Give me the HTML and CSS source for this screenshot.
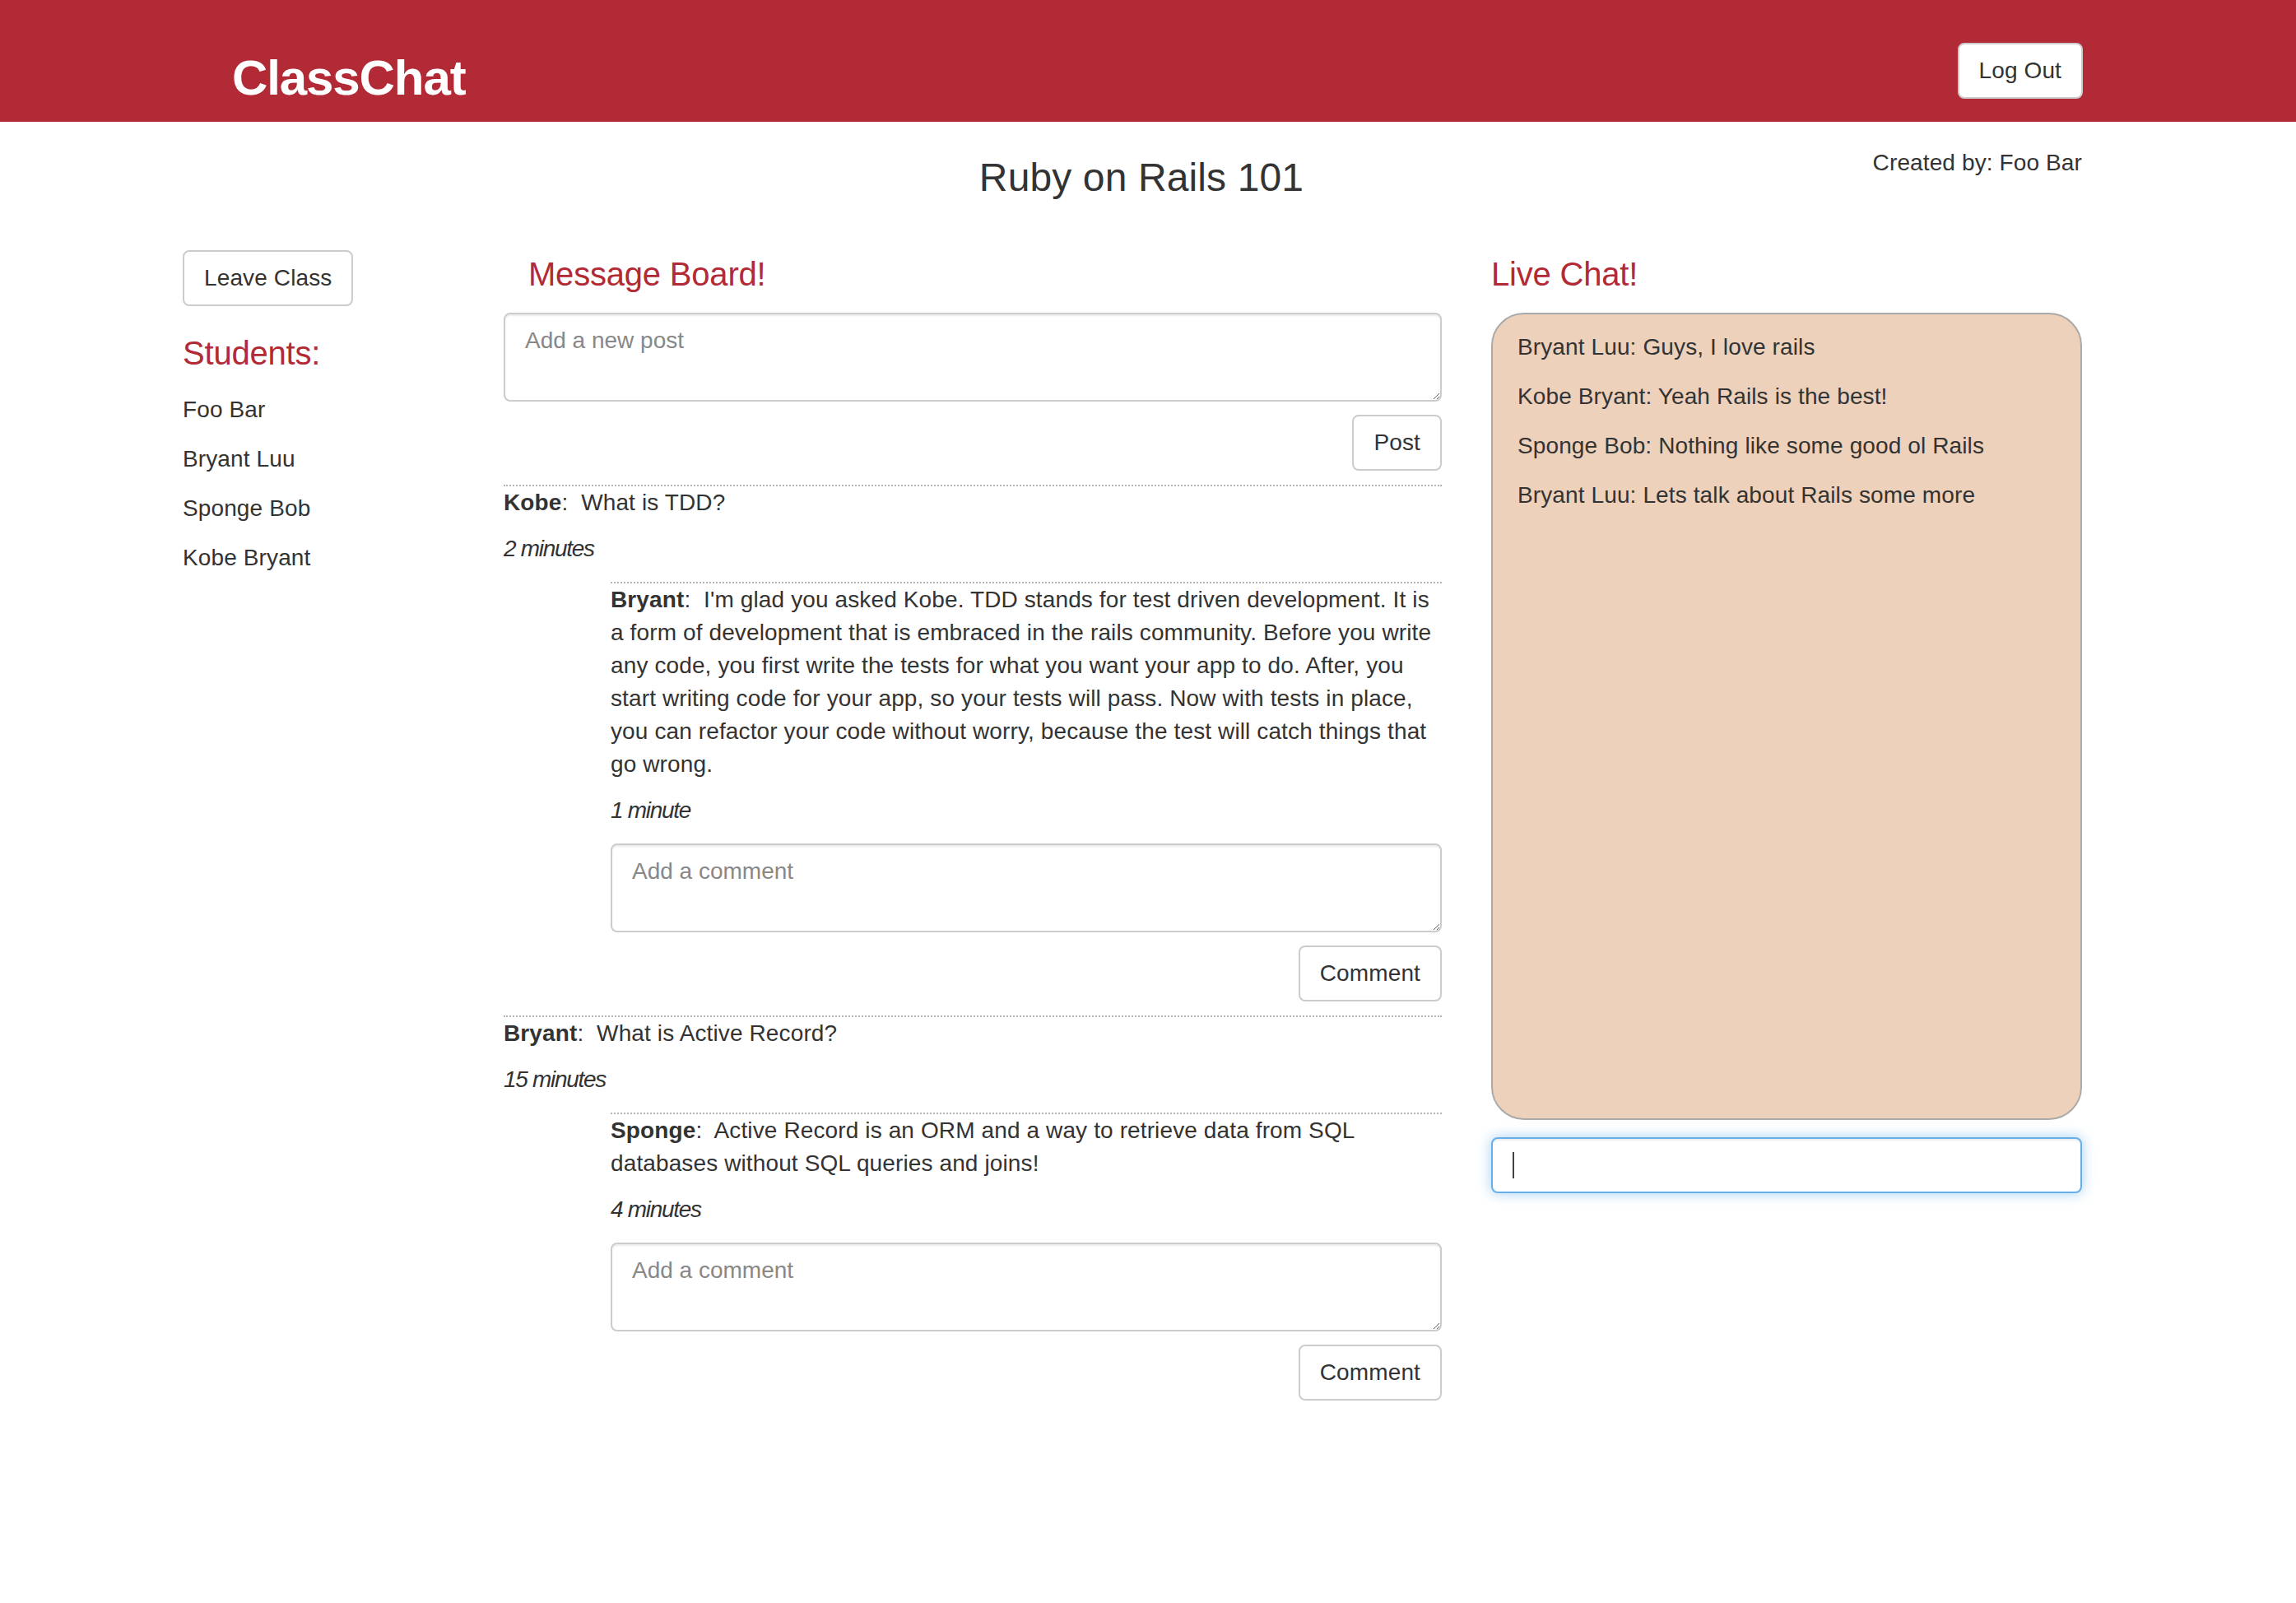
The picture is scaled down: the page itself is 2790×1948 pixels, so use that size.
FILE: index.html
```html
<!DOCTYPE html>
<html lang="en">
<head>
<meta charset="utf-8">
<title>ClassChat</title>
<link rel="stylesheet" href="styles.css">
</head>
<body>
<nav class="navbar">
  <div class="container nav-inner">
    <a class="brand">ClassChat</a>
    <button class="btn nav-btn">Log Out</button>
  </div>
</nav>

<header class="container page-header">
  <div></div>
  <h1 class="title">Ruby on Rails 101</h1>
  <p class="created">Created by: Foo Bar</p>
</header>

<main class="container main">
  <aside class="col-left">
    <button class="btn">Leave Class</button>
    <h2 class="section-title students-title">Students:</h2>
    <p class="student">Foo Bar</p>
    <p class="student">Bryant Luu</p>
    <p class="student">Sponge Bob</p>
    <p class="student">Kobe Bryant</p>
  </aside>

  <section class="col-mid">
    <h2 class="section-title board-title">Message Board!</h2>
    <form class="entry-form">
      <textarea class="field" placeholder="Add a new post"></textarea>
      <div class="actions"><button type="button" class="btn">Post</button></div>
    </form>

    <article class="post">
      <p class="line"><strong>Kobe</strong>:&nbsp; What is TDD?</p>
      <p class="ts">2 minutes</p>
      <div class="replies">
        <div class="reply">
          <p class="line"><strong>Bryant</strong>:&nbsp; I'm glad you asked Kobe. TDD stands for test driven development. It is a form of development that is embraced in the rails community. Before you write any code, you first write the tests for what you want your app to do. After, you start writing code for your app, so your tests will pass. Now with tests in place, you can refactor your code without worry, because the test will catch things that go wrong.</p>
          <p class="ts">1 minute</p>
        </div>
        <form class="entry-form">
          <textarea class="field" placeholder="Add a comment"></textarea>
          <div class="actions"><button type="button" class="btn">Comment</button></div>
        </form>
      </div>
    </article>

    <article class="post">
      <p class="line"><strong>Bryant</strong>:&nbsp; What is Active Record?</p>
      <p class="ts">15 minutes</p>
      <div class="replies">
        <div class="reply">
          <p class="line"><strong>Sponge</strong>:&nbsp; Active Record is an ORM and a way to retrieve data from SQL databases without SQL queries and joins!</p>
          <p class="ts">4 minutes</p>
        </div>
        <form class="entry-form">
          <textarea class="field" placeholder="Add a comment"></textarea>
          <div class="actions"><button type="button" class="btn">Comment</button></div>
        </form>
      </div>
    </article>
  </section>

  <section class="col-right">
    <h2 class="section-title">Live Chat!</h2>
    <div class="chat-box">
      <p>Bryant Luu: Guys, I love rails</p>
      <p>Kobe Bryant: Yeah Rails is the best!</p>
      <p>Sponge Bob: Nothing like some good ol Rails</p>
      <p>Bryant Luu: Lets talk about Rails some more</p>
    </div>
    <div class="chat-input-wrap">
      <input class="chat-input" type="text">
      <span class="caret"></span>
    </div>
  </section>
</main>
</body>
</html>
```

FILE: styles.css
```css
* { box-sizing: border-box; }

html, body {
  margin: 0;
  padding: 0;
  background: #fff;
}

body {
  font-family: "Liberation Sans", Arial, Helvetica, sans-serif;
  font-size: 28px;
  line-height: 40px;
  letter-spacing: 0.12px;
  color: #333;
}

.container {
  width: 2308px;
  margin-left: 222px;
}

/* buttons */
.btn {
  display: inline-block;
  font-family: inherit;
  font-size: 28px;
  line-height: 40px;
  letter-spacing: 0.12px;
  padding: 12px 24px;
  color: #333;
  background: #fff;
  border: 2px solid #ccc;
  border-radius: 8px;
  height: 68px;
  margin: 0;
  cursor: pointer;
}

/* navbar */
.navbar {
  background: #b22a36;
  height: 148px;
}
.nav-inner {
  display: flex;
  justify-content: space-between;
  align-items: flex-start;
}
.brand {
  margin: 65px 0 0 60px;
  font-size: 60px;
  line-height: 60px;
  font-weight: bold;
  color: #fff;
  letter-spacing: -1.1px;
}
.nav-inner .nav-btn {
  margin: 52px -1px 0 0;
}

/* header */
.page-header {
  display: grid;
  grid-template-columns: 1fr auto 1fr;
  align-items: start;
}
.title {
  margin: 41px 0 0 22px;
  font-size: 48px;
  line-height: 53px;
  font-weight: 500;
  color: #333;
}
.created {
  justify-self: end;
  margin: 30px 0 0 0;
}

/* main columns */
.main {
  display: flex;
  align-items: flex-start;
  margin-top: 62px;
}
.col-left {
  flex: 0 0 390px;
}
.col-mid {
  flex: 0 0 1140px;
}
.col-right {
  flex: 1 1 auto;
  margin-left: 60px;
}

.section-title {
  font-size: 40px;
  line-height: 44px;
  font-weight: 500;
  color: #b22a36;
  margin: 7px 0 25px 0;
  letter-spacing: -0.2px;
}
.students-title {
  margin: 35px 0 27px 0;
}
.board-title {
  padding-left: 30px;
}

.student {
  margin: 0 0 20px 0;
}

/* forms */
.entry-form {
  margin: 0;
}
.field {
  display: block;
  width: 100%;
  height: 108px;
  padding: 12px 24px;
  font-family: inherit;
  font-size: 28px;
  line-height: 40px;
  color: #555;
  background: #fff;
  border: 2px solid #ccc;
  border-radius: 8px;
  box-shadow: inset 0 2px 2px rgba(0, 0, 0, 0.075);
  resize: vertical;
  margin: 0 0 16px 0;
}
.field::placeholder {
  color: #888;
}
.actions {
  display: flex;
  justify-content: flex-end;
  margin-bottom: 17px;
}

/* posts */
.post {
  border-top: 2px dotted #b5b5b5;
}
.line {
  margin: 0;
}
.ts {
  margin: 16px 0 20px 0;
  font-style: italic;
  letter-spacing: -1.3px;
}
.replies {
  margin-left: 130px;
}
.reply {
  border-top: 2px dotted #b5b5b5;
}

/* chat */
.chat-box {
  height: 981px;
  background: #edd1ba;
  border: 2px solid #aaa;
  border-radius: 40px;
  padding: 20px 30px;
}
.chat-box p {
  margin: 0 0 20px 0;
}
.chat-input-wrap {
  position: relative;
  margin-top: 21px;
}
.chat-input {
  display: block;
  width: 100%;
  height: 68px;
  padding: 12px 24px;
  font-family: inherit;
  font-size: 28px;
  border: 2px solid #66afe9;
  border-radius: 8px;
  outline: none;
  box-shadow: inset 0 2px 2px rgba(0, 0, 0, 0.075), 0 0 16px rgba(102, 175, 233, 0.6);
}
.caret {
  position: absolute;
  left: 26px;
  top: 18px;
  width: 2px;
  height: 32px;
  background: #444;
}
```
